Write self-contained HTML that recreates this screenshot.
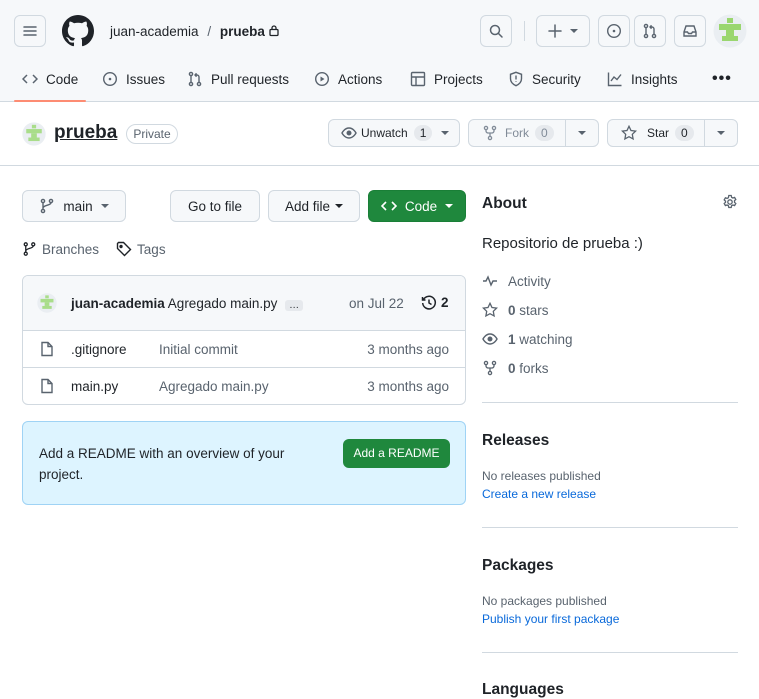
<!DOCTYPE html>
<html><head><meta charset="utf-8">
<style>
*{box-sizing:border-box;margin:0;padding:0}
body{width:759px;height:693px;overflow:hidden;background:#fff;font-family:"Liberation Sans",sans-serif;color:#1f2328;font-size:13px;position:relative}
.a{position:absolute}
.btn{position:absolute;border:1px solid #d1d9e0;border-radius:6px;background:#f6f8fa;display:flex;align-items:center;justify-content:center;color:#1f2328}
.ib{background:transparent}
svg{display:block}
.tab{position:absolute;top:71px;display:flex;align-items:center;gap:8px;font-size:13.5px;color:#1f2328}
.cnt{background:#e6e9ed;border-radius:10px;padding:1px 6px;font-size:12px;margin-left:6px}
.muted{color:#59636e}
.hr{position:absolute;height:1px;background:#d1d9e0}
.side{position:absolute;left:482px;display:flex;align-items:center;gap:10px;font-size:13.5px;color:#59636e}
</style></head><body>
<div class="a" style="left:0;top:0;width:759px;height:102px;background:#f6f8fa;border-bottom:1px solid #d1d9e0"></div>
<div class="btn ib" style="left:14px;top:15px;width:32px;height:32px"><svg width="16" height="16" viewBox="0 0 16 16"><path d="M2 4h12M2 8h12M2 12h12" stroke="#59636e" stroke-width="1.5" stroke-linecap="round"/></svg></div>
<svg class="a" style="left:62px;top:15px" width="32" height="32" viewBox="0 0 16 16"><path fill="#1f2328" d="M8 0C3.58 0 0 3.580 0 8c0 3.54 2.29 6.53 5.47 7.59.4.07.55-.17.55-.38 0-.19-.01-.82-.01-1.49-2.01.37-2.530-.49-2.69-.94-.09-.23-.48-.94-.82-1.13-.28-.15-.68-.52-.01-.53.63-.01 1.08.58 1.23.82.72 1.21 1.87.87 2.33.66.07-.52.28-.87.51-1.07-1.78-.2-3.64-.89-3.64-3.95 0-.87.31-1.59.82-2.15-.08-.2-.36-1.02.08-2.12 0 0 .67-.21 2.2.82.64-.18 1.32-.27 2-.27.68 0 1.36.09 2 .27 1.53-1.04 2.2-.82 2.2-.82.44 1.1.16 1.92.08 2.12.51.56.82 1.27.82 2.15 0 3.07-1.87 3.75-3.65 3.95.29.25.54.73.54 1.48 0 1.07-.01 1.930-.01 2.2 0 .21.15.46.55.38A8.013 8.013 0 0016 8c0-4.42-3.58-8-8-8z"/></svg>
<div class="a" style="left:110px;top:24px;font-size:13.5px">juan-academia <span class="muted" style="margin:0 5px">/</span> <b style="font-weight:600">prueba</b></div>
<svg class="a" style="left:268px;top:24px" width="12" height="13" viewBox="0 0 12 13"><rect x="2" y="5.5" width="8" height="6" rx="1" fill="none" stroke="#1f2328" stroke-width="1.3"/><path d="M4 5.5V4a2 2 0 014 0v1.5" fill="none" stroke="#1f2328" stroke-width="1.3"/></svg>
<div class="btn ib" style="left:480px;top:15px;width:32px;height:32px"><svg width="16" height="16" viewBox="0 0 16 16"><circle cx="7" cy="7" r="4.5" fill="none" stroke="#59636e" stroke-width="1.5"/><path d="M10.5 10.5L14 14" stroke="#59636e" stroke-width="1.5" stroke-linecap="round"/></svg></div>
<div class="a" style="left:524px;top:21px;width:1px;height:20px;background:#d1d9e0"></div>
<div class="btn ib" style="left:536px;top:15px;width:54px;height:32px;gap:8px"><svg width="14" height="14" viewBox="0 0 14 14"><path d="M7 1v12M1 7h12" stroke="#59636e" stroke-width="1.5" stroke-linecap="round"/></svg><svg width="8" height="5"><path d="M0 0h8L4 4z" fill="#59636e"/></svg></div>
<div class="btn ib" style="left:598px;top:15px;width:32px;height:32px"><svg width="16" height="16" viewBox="0 0 16 16"><circle cx="8" cy="8" r="6.3" fill="none" stroke="#59636e" stroke-width="1.4"/><circle cx="8" cy="8" r="1.3" fill="#59636e"/></svg></div>
<div class="btn ib" style="left:634px;top:15px;width:32px;height:32px"><svg width="16" height="16" viewBox="0 0 16 16" fill="none" stroke="#59636e" stroke-width="1.4"><circle cx="4" cy="3" r="1.6"/><circle cx="4" cy="13" r="1.6"/><circle cx="12" cy="13" r="1.6"/><path d="M4 4.6v6.8M12 11.4V6a2 2 0 00-2-2H8M9.5 2.3L8 4l1.5 1.7"/></svg></div>
<div class="btn ib" style="left:674px;top:15px;width:32px;height:32px"><svg width="16" height="16" viewBox="0 0 16 16" fill="none" stroke="#59636e" stroke-width="1.4"><path d="M2 9l2-6h8l2 6v4H2zM2 9h3.5l1 1.5h3l1-1.5H14"/></svg></div>
<svg class="a" style="left:713px;top:14px" width="34" height="34" viewBox="0 0 34 34"><circle cx="17" cy="17" r="16.5" fill="#eaeef2"/><g fill="#9ad66f"><rect x="14" y="4" width="6" height="5"/><rect x="6" y="10" width="22" height="6"/><rect x="13" y="16" width="8" height="6"/><rect x="9" y="22" width="16" height="5"/></g></svg>
<div class="tab" style="left:22px"><svg width="16" height="16" viewBox="0 0 16 16" fill="none" stroke="#59636e" stroke-width="1.5"><path d="M5 4L1 8l4 4M11 4l4 4-4 4"/></svg><span>Code</span></div>
<div class="a" style="left:14px;top:100px;width:72px;height:2px;background:#fd8c73;border-radius:1px"></div>
<div class="tab" style="left:102px"><svg width="16" height="16" viewBox="0 0 16 16"><circle cx="8" cy="8" r="6.3" fill="none" stroke="#59636e" stroke-width="1.4"/><circle cx="8" cy="8" r="1.3" fill="#59636e"/></svg>Issues</div>
<div class="tab" style="left:187px"><svg width="16" height="16" viewBox="0 0 16 16" fill="none" stroke="#59636e" stroke-width="1.4"><circle cx="4" cy="3" r="1.6"/><circle cx="4" cy="13" r="1.6"/><circle cx="12" cy="13" r="1.6"/><path d="M4 4.6v6.8M12 11.4V6a2 2 0 00-2-2H8M9.5 2.3L8 4l1.5 1.7"/></svg>Pull requests</div>
<div class="tab" style="left:314px"><svg width="16" height="16" viewBox="0 0 16 16"><circle cx="8" cy="8" r="6.3" fill="none" stroke="#59636e" stroke-width="1.4"/><path d="M6.5 5.5v5l4-2.5z" fill="#59636e"/></svg>Actions</div>
<div class="tab" style="left:410px"><svg width="16" height="16" viewBox="0 0 16 16" fill="none" stroke="#59636e" stroke-width="1.4"><rect x="1.5" y="1.5" width="13" height="13" rx="1"/><path d="M1.5 6h13M6 6v8.5"/></svg>Projects</div>
<div class="tab" style="left:508px"><svg width="16" height="16" viewBox="0 0 16 16" fill="none" stroke="#59636e" stroke-width="1.4"><path d="M8 1.3l5.5 2v4.5c0 3.3-2.5 5.6-5.5 6.9C5 13.4 2.5 11.1 2.5 7.8V3.3z"/><path d="M8 4.5v4M8 10.3v.6"/></svg>Security</div>
<div class="tab" style="left:607px"><svg width="16" height="16" viewBox="0 0 16 16" fill="none" stroke="#59636e" stroke-width="1.4"><path d="M1.5 1.5v13h13M4 10l3-4 3 2.5 4-5"/></svg>Insights</div>
<div class="a" style="left:712px;top:70px;font-size:16px;letter-spacing:1px;font-weight:bold">•••</div>
<svg class="a" style="left:22px;top:122px" width="24" height="24" viewBox="0 0 34 34"><circle cx="17" cy="17" r="16.5" fill="#eaeef2"/><g fill="#a9dd8a"><rect x="14" y="4" width="6" height="5"/><rect x="6" y="10" width="22" height="6"/><rect x="13" y="16" width="8" height="6"/><rect x="9" y="22" width="16" height="5"/></g></svg>
<div class="a" style="left:54px;top:122px;font-size:19px;font-weight:bold;text-decoration:underline">prueba</div>
<div class="a" style="left:126px;top:124px;width:52px;height:20px;border:1px solid #d1d9e0;border-radius:10px;font-size:12px;color:#59636e;text-align:center;line-height:18px">Private</div>
<div class="btn" style="left:328px;top:119px;width:132px;height:28px;justify-content:flex-start;padding-left:12px;font-size:12px"><svg width="16" height="16" viewBox="0 0 16 16" fill="none" stroke="#59636e" stroke-width="1.4"><path d="M1 8s2.5-5 7-5 7 5 7 5-2.5 5-7 5-7-5-7-5z"/><circle cx="8" cy="8" r="1.8" fill="#59636e"/></svg><span style="margin-left:4px">Unwatch</span><span class="cnt">1</span><svg style="margin-left:9px" width="8" height="5"><path d="M0 0h8L4 4z" fill="#59636e"/></svg></div>
<div class="btn" style="left:468px;top:119px;width:131px;height:28px;justify-content:flex-start;padding-left:14px;font-size:12px;color:#818b98"><svg width="14" height="16" viewBox="0 0 14 16" fill="none" stroke="#818b98" stroke-width="1.3"><circle cx="3" cy="3" r="1.6"/><circle cx="11" cy="3" r="1.6"/><circle cx="7" cy="13" r="1.6"/><path d="M3 4.6v1.4c0 1 1 2 2 2h4c1 0 2-1 2-2V4.6M7 8v3.4"/></svg><span style="margin-left:8px">Fork</span><span class="cnt" style="color:#818b98">0</span></div>
<div class="a" style="left:565px;top:120px;width:1px;height:26px;background:#d1d9e0"></div>
<svg class="a" style="left:578px;top:131px" width="8" height="5"><path d="M0 0h8L4 4z" fill="#59636e"/></svg>
<div class="btn" style="left:607px;top:119px;width:131px;height:28px;justify-content:flex-start;padding-left:13px;font-size:12px"><svg width="16" height="16" viewBox="0 0 16 16" fill="none" stroke="#59636e" stroke-width="1.3"><path d="M8 1.3l2 4.2 4.6.6-3.3 3.2.8 4.6L8 11.7l-4.1 2.2.8-4.6L1.4 6.1 6 5.5z"/></svg><span style="margin-left:10px">Star</span><span class="cnt">0</span></div>
<div class="a" style="left:704px;top:120px;width:1px;height:26px;background:#d1d9e0"></div>
<svg class="a" style="left:717px;top:131px" width="8" height="5"><path d="M0 0h8L4 4z" fill="#59636e"/></svg>
<div class="hr" style="left:0;top:165px;width:759px"></div>
<div class="btn" style="left:22px;top:190px;width:104px;height:32px;gap:8px;font-size:13.5px"><svg width="16" height="16" viewBox="0 0 16 16" fill="none" stroke="#59636e" stroke-width="1.4"><circle cx="4" cy="3" r="1.6"/><circle cx="12" cy="3" r="1.6"/><circle cx="4" cy="13" r="1.6"/><path d="M4 4.6v6.8M12 4.6c0 3-8 2.5-8 5.5"/></svg>main<svg width="8" height="5"><path d="M0 0h8L4 4z" fill="#59636e"/></svg></div>
<div class="btn" style="left:170px;top:190px;width:90px;height:32px;font-size:13.5px">Go to file</div>
<div class="btn" style="left:268px;top:190px;width:92px;height:32px;font-size:13.5px;gap:5px">Add file<svg width="8" height="5"><path d="M0 0h8L4 4z" fill="#1f2328"/></svg></div>
<div class="btn" style="left:368px;top:190px;width:98px;height:32px;background:#1f883d;border-color:#1a7f37;color:#fff;font-size:13.5px;gap:8px"><svg width="16" height="16" viewBox="0 0 16 16" fill="none" stroke="#fff" stroke-width="1.6"><path d="M5 4L1 8l4 4M11 4l4 4-4 4"/></svg>Code<svg width="8" height="5"><path d="M0 0h8L4 4z" fill="#fff"/></svg></div>
<div class="a muted" style="left:22px;top:241px;display:flex;align-items:center;gap:5px;font-size:13.5px"><svg width="15" height="16" viewBox="0 0 16 16" fill="none" stroke="#1f2328" stroke-width="1.4"><circle cx="4" cy="3" r="1.6"/><circle cx="12" cy="3" r="1.6"/><circle cx="4" cy="13" r="1.6"/><path d="M4 4.6v6.8M12 4.6c0 3-8 2.5-8 5.5"/></svg>Branches<svg style="margin-left:12px" width="16" height="16" viewBox="0 0 16 16" fill="none" stroke="#1f2328" stroke-width="1.4"><path d="M1.5 2.5v5l7 7 6-6-7-7h-5z"/><circle cx="5" cy="5.5" r="1" fill="#1f2328"/></svg>Tags</div>
<div class="a" style="left:22px;top:275px;width:444px;height:130px;border:1px solid #d1d9e0;border-radius:6px;overflow:hidden">
 <div style="height:55px;background:#f6f8fa;border-bottom:1px solid #d1d9e0;position:relative">
  <svg class="a" style="left:14px;top:17px" width="20" height="20" viewBox="0 0 34 34"><circle cx="17" cy="17" r="16.5" fill="#eaeef2"/><g fill="#a9dd8a"><rect x="14" y="4" width="6" height="5"/><rect x="6" y="10" width="22" height="6"/><rect x="13" y="16" width="8" height="6"/><rect x="9" y="22" width="16" height="5"/></g></svg>
  <div class="a" style="left:48px;top:20px;font-size:13.5px;white-space:nowrap"><b style="font-weight:600">juan-academia</b> Agregado main.py <span style="background:#e6e9ed;border-radius:3px;padding:0 4px;font-size:10px;margin-left:4px">…</span></div>
  <div class="a muted" style="left:326px;top:20px;font-size:13.5px">on Jul 22</div>
  <svg class="a" style="left:398px;top:19px" width="16" height="16" viewBox="0 0 16 16" fill="none" stroke="#1f2328" stroke-width="1.5"><path d="M2.5 4.5A6.3 6.3 0 111.7 8M1.5 2v3h3M8 4.5V8l2.5 1.5"/></svg>
  <div class="a" style="left:418px;top:19px;font-size:13.5px;font-weight:600">2</div>
 </div>
 <div style="height:37px;border-bottom:1px solid #d1d9e0;position:relative;font-size:13.5px">
  <svg class="a" style="left:16px;top:10px" width="16" height="16" viewBox="0 0 16 16" fill="none" stroke="#59636e" stroke-width="1.4"><path d="M3 1.5h6l4 4v9H3z"/><path d="M9 1.5v4h4"/></svg>
  <div class="a" style="left:48px;top:11px">.gitignore</div><div class="a muted" style="left:136px;top:11px">Initial commit</div><div class="a muted" style="right:16px;top:11px">3 months ago</div>
 </div>
 <div style="height:37px;position:relative;font-size:13.5px">
  <svg class="a" style="left:16px;top:10px" width="16" height="16" viewBox="0 0 16 16" fill="none" stroke="#59636e" stroke-width="1.4"><path d="M3 1.5h6l4 4v9H3z"/><path d="M9 1.5v4h4"/></svg>
  <div class="a" style="left:48px;top:11px">main.py</div><div class="a muted" style="left:136px;top:11px">Agregado main.py</div><div class="a muted" style="right:16px;top:11px">3 months ago</div>
 </div>
</div>
<div class="a" style="left:22px;top:421px;width:444px;height:84px;background:#ddf4ff;border:1px solid #9fd3f5;border-radius:6px">
 <div class="a" style="left:16px;top:21px;width:270px;font-size:13.5px;line-height:21px">Add a README with an overview of your project.</div>
 <div class="a" style="left:320px;top:17px;width:107px;height:29px;background:#1f883d;border-radius:6px;color:#fff;font-size:12px;text-align:center;line-height:29px">Add a README</div>
</div>
<div class="a" style="left:482px;top:195px;font-size:15.5px;font-weight:bold">About</div>
<svg class="a" style="left:722px;top:194px" width="16" height="16" viewBox="0 0 16 16" fill="none" stroke="#59636e" stroke-width="1.3"><circle cx="8" cy="8" r="2.2"/><path d="M6.8 1.5h2.4l.4 1.8 1.3.7 1.7-.6 1.2 2.1-1.3 1.2v1.6l1.3 1.2-1.2 2.1-1.7-.6-1.3.7-.4 1.8H6.8l-.4-1.8-1.3-.7-1.7.6-1.2-2.1 1.3-1.2V7.1L2.2 5.9l1.2-2.1 1.7.6 1.3-.7z"/></svg>
<div class="a" style="left:482px;top:235px;font-size:15px">Repositorio de prueba :)</div>
<div class="side" style="top:273px"><svg width="16" height="16" viewBox="0 0 16 16" fill="none" stroke="#59636e" stroke-width="1.4"><path d="M1 8h3l2-4 3 8 2-4h4"/></svg>Activity</div>
<div class="side" style="top:302px"><svg width="16" height="16" viewBox="0 0 16 16" fill="none" stroke="#59636e" stroke-width="1.3"><path d="M8 1.3l2 4.2 4.6.6-3.3 3.2.8 4.6L8 11.7l-4.1 2.2.8-4.6L1.4 6.1 6 5.5z"/></svg><span><b>0</b> stars</span></div>
<div class="side" style="top:331px"><svg width="16" height="16" viewBox="0 0 16 16" fill="none" stroke="#59636e" stroke-width="1.4"><path d="M1 8s2.5-5 7-5 7 5 7 5-2.5 5-7 5-7-5-7-5z"/><circle cx="8" cy="8" r="1.8" fill="#59636e"/></svg><span><b>1</b> watching</span></div>
<div class="side" style="top:360px"><svg width="16" height="16" viewBox="0 0 14 16" fill="none" stroke="#59636e" stroke-width="1.3"><circle cx="3" cy="3" r="1.6"/><circle cx="11" cy="3" r="1.6"/><circle cx="7" cy="13" r="1.6"/><path d="M3 4.6v1.4c0 1 1 2 2 2h4c1 0 2-1 2-2V4.6M7 8v3.4"/></svg><span><b>0</b> forks</span></div>
<div class="hr" style="left:482px;top:402px;width:256px"></div>
<div class="a" style="left:482px;top:432px;font-size:15.5px;font-weight:bold">Releases</div>
<div class="a muted" style="left:482px;top:469px;font-size:12px">No releases published</div>
<div class="a" style="left:482px;top:487px;font-size:12px;color:#0969da">Create a new release</div>
<div class="hr" style="left:482px;top:527px;width:256px"></div>
<div class="a" style="left:482px;top:557px;font-size:15.5px;font-weight:bold">Packages</div>
<div class="a muted" style="left:482px;top:594px;font-size:12px">No packages published</div>
<div class="a" style="left:482px;top:612px;font-size:12px;color:#0969da">Publish your first package</div>
<div class="hr" style="left:482px;top:652px;width:256px"></div>
<div class="a" style="left:482px;top:681px;font-size:15.5px;font-weight:bold">Languages</div>
</body></html>
